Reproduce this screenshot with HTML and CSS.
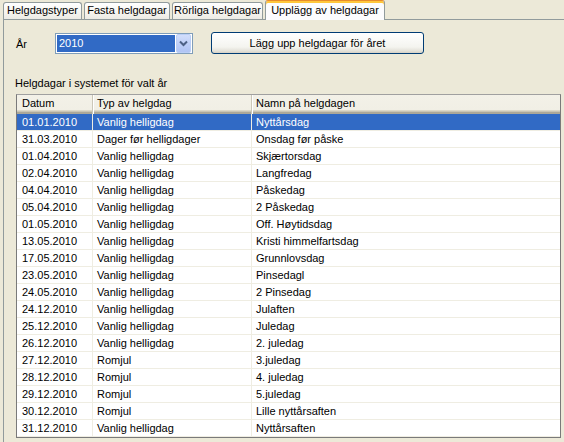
FILE: index.html
```html
<!DOCTYPE html>
<html>
<head>
<meta charset="utf-8">
<link rel="stylesheet" href="styles.css">
</head>
<body>
<div class="window">
  <div class="tabs">
    <div class="tab t1">Helgdagstyper</div>
    <div class="tab t2">Fasta helgdagar</div>
    <div class="tab t3">Rörliga helgdagar</div>
    <div class="tab active">Upplägg av helgdagar</div>
  </div>
  <div class="panel">
    <div class="toprow">
      <span class="lbl">År</span>
      <div class="combo">
        <span class="combo-val">2010</span>
        <span class="combo-btn"><svg width="15" height="19" viewBox="0 0 15 19"><path d="M4 7.5 L7.5 11 L11 7.5" fill="none" stroke="#4D6185" stroke-width="2"/></svg></span>
      </div>
      <button class="btn">Lägg upp helgdagar för året</button>
    </div>
    <div class="caption">Helgdagar i systemet för valt år</div>
    <div class="list">
      <div class="hdr"><div class="hc c1">Datum</div><div class="hc">Typ av helgdag</div><div class="hc">Namn på helgdagen</div></div>
      <div class="row sel"><div class="c c1">01.01.2010</div><div class="c">Vanlig helligdag</div><div class="c">Nyttårsdag</div></div>
      <div class="row"><div class="c c1">31.03.2010</div><div class="c">Dager før helligdager</div><div class="c">Onsdag før påske</div></div>
      <div class="row"><div class="c c1">01.04.2010</div><div class="c">Vanlig helligdag</div><div class="c">Skjærtorsdag</div></div>
      <div class="row"><div class="c c1">02.04.2010</div><div class="c">Vanlig helligdag</div><div class="c">Langfredag</div></div>
      <div class="row"><div class="c c1">04.04.2010</div><div class="c">Vanlig helligdag</div><div class="c">Påskedag</div></div>
      <div class="row"><div class="c c1">05.04.2010</div><div class="c">Vanlig helligdag</div><div class="c">2 Påskedag</div></div>
      <div class="row"><div class="c c1">01.05.2010</div><div class="c">Vanlig helligdag</div><div class="c">Off. Høytidsdag</div></div>
      <div class="row"><div class="c c1">13.05.2010</div><div class="c">Vanlig helligdag</div><div class="c">Kristi himmelfartsdag</div></div>
      <div class="row"><div class="c c1">17.05.2010</div><div class="c">Vanlig helligdag</div><div class="c">Grunnlovsdag</div></div>
      <div class="row"><div class="c c1">23.05.2010</div><div class="c">Vanlig helligdag</div><div class="c">Pinsedagl</div></div>
      <div class="row"><div class="c c1">24.05.2010</div><div class="c">Vanlig helligdag</div><div class="c">2 Pinsedag</div></div>
      <div class="row"><div class="c c1">24.12.2010</div><div class="c">Vanlig helligdag</div><div class="c">Julaften</div></div>
      <div class="row"><div class="c c1">25.12.2010</div><div class="c">Vanlig helligdag</div><div class="c">Juledag</div></div>
      <div class="row"><div class="c c1">26.12.2010</div><div class="c">Vanlig helligdag</div><div class="c">2. juledag</div></div>
      <div class="row"><div class="c c1">27.12.2010</div><div class="c">Romjul</div><div class="c">3.juledag</div></div>
      <div class="row"><div class="c c1">28.12.2010</div><div class="c">Romjul</div><div class="c">4. juledag</div></div>
      <div class="row"><div class="c c1">29.12.2010</div><div class="c">Romjul</div><div class="c">5.juledag</div></div>
      <div class="row"><div class="c c1">30.12.2010</div><div class="c">Romjul</div><div class="c">Lille nyttårsaften</div></div>
      <div class="row"><div class="c c1">31.12.2010</div><div class="c">Vanlig helligdag</div><div class="c">Nyttårsaften</div></div>
    </div>
  </div>
</div>
</body>
</html>
```

FILE: styles.css
```css
* { box-sizing: border-box; }
html, body {
  margin: 0;
  padding: 0;
  width: 564px;
  height: 442px;
  overflow: hidden;
  background: #ECE9D8;
  font-family: "Liberation Sans", Arial, sans-serif;
  font-size: 11px;
  color: #000;
}
.window {
  display: flex;
  flex-direction: column;
  height: 442px;
}
.tabs {
  display: flex;
  align-items: flex-end;
  height: 19px;
  padding-left: 3px;
}
.tab {
  height: 17px;
  margin-right: 2px;
  border: 1px solid #919B9C;
  border-bottom: none;
  border-radius: 3px 3px 0 0;
  background: linear-gradient(#FFFFFF, #F5F4EF 60%, #ECEBE4);
  text-align: center;
  line-height: 15px;
  white-space: nowrap;
}
.t1 { width: 79px; }
.t2 { width: 86px; }
.t3 { width: 91px; }
.tab.active {
  width: 120px;
  height: 20px;
  margin-bottom: -1px;
  position: relative;
  z-index: 1;
  background: #FCFCFE;
  border-top: 1px solid #E68B2C;
  box-shadow: inset 0 2px 0 #FFC73C;
  line-height: 18px;
}
.panel {
  flex: 1;
  margin-left: 3px;
  border-left: 1px solid #919B9C;
  border-top: 1px solid #919B9C;
  background: #ECE9D8;
}
.toprow {
  display: flex;
  align-items: center;
  height: 22px;
  margin-top: 12px;
  padding-left: 12px;
}
.lbl {
  width: 39px;
  padding-top: 2px;
}
.combo {
  display: flex;
  width: 138px;
  height: 21px;
  border: 1px solid #7F9DB9;
  background: #FFFFFF;
}
.combo-val {
  flex: 1;
  margin: 1px;
  height: 17px;
  background: #316AC5;
  color: #FFFFFF;
  line-height: 17px;
  padding-left: 2px;
}
.combo-btn {
  width: 15px;
  height: 19px;
  margin-right: 1px;
  border: 1px solid #BACEF6;
  border-radius: 2px;
  background: linear-gradient(#D2DEFB, #BCCDF7 60%, #B0C4F4);
  display: flex;
}
.combo-btn svg { margin: -1px; }
.btn {
  width: 213px;
  height: 22px;
  margin-left: 18px;
  padding: 0;
  border: 1px solid #003C74;
  border-radius: 3px;
  background: linear-gradient(#FFFFFF, #F4F4EF 70%, #E3E1D8 90%, #D6D0C5);
  font-family: "Liberation Sans", Arial, sans-serif;
  font-size: 11px;
  color: #000;
}
.caption {
  margin-top: 21px;
  padding-left: 11px;
  height: 17px;
  line-height: 16px;
  margin-bottom: 2px;
}
.list {
  margin-left: 12px;
  width: 545px;
  border: 1px solid #7A7A7A;
  border-top-color: #A0A0A0;
  background: #FFFFFF;
}
.hdr {
  display: grid;
  grid-template-columns: 76px 159px 1fr;
  height: 19px;
  background: linear-gradient(#F3F1E8 0, #F1EFE5 15px, #DCD8C8 15px, #DCD8C8 16px, #C9C5B5 16px, #C9C5B5 17px, #ACA899 17px);
}
.hc {
  padding-left: 4px;
  line-height: 17px;
  border-right: 1px solid #CBC7B8;
  box-shadow: 1px 0 0 #FFFFFF;
  white-space: nowrap;
}
.hc:last-child { border-right: none; box-shadow: none; }
.hc.c1, .c.c1 { padding-left: 5px; }
.row {
  display: grid;
  grid-template-columns: 76px 159px 1fr;
  height: 17px;
}
.c {
  padding-left: 4px;
  line-height: 16px;
  border-right: 1px solid #EFEDE2;
  border-bottom: 1px solid #EFEDE2;
  white-space: nowrap;
}
.c:last-child { border-right: none; }
.row.sel .c {
  background: #316AC5;
  color: #FFFFFF;
}
```
